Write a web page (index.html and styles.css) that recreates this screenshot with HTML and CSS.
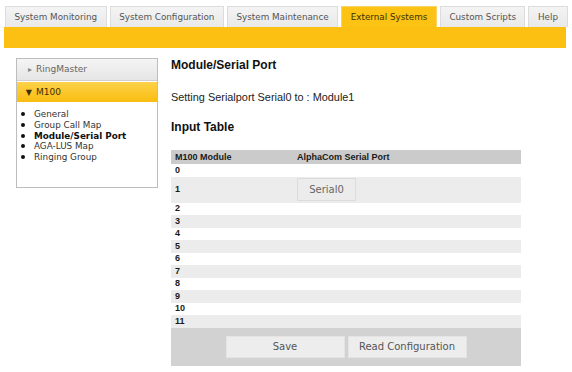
FILE: index.html
```html
<!DOCTYPE html>
<html lang="en">
<head>
    <meta charset="UTF-8">
    <title>External Systems - M100</title>
    <link rel="stylesheet" href="styles.css">
</head>
<body>

    <!-- main tabs -->
    <div class="tabs">
        <span class="tab">System Monitoring</span>
        <span class="tab">System Configuration</span>
        <span class="tab">System Maintenance</span>
        <span class="tab active">External Systems</span>
        <span class="tab">Custom Scripts</span>
        <span class="tab">Help</span>
    </div>
    <div class="bar"></div>

    <div class="main">
        <!-- left menu -->
        <div class="side">
            <div class="group closed"><span class="arrow">&#9656;</span>RingMaster</div>
            <div class="group open"><span class="arrow">&#9660;</span>M100</div>
            <ul class="menu">
                <li>General</li>
                <li>Group Call Map</li>
                <li class="current">Module/Serial Port</li>
                <li>AGA-LUS Map</li>
                <li>Ringing Group</li>
            </ul>
        </div>

        <!-- page content -->
        <div class="content">
            <h1>Module/Serial Port</h1>
            <p class="msg">Setting Serialport Serial0 to : Module1</p>
            <h2>Input Table</h2>

            <table class="grid">
                <tr class="head"><th class="c1">M100 Module</th><th>AlphaCom Serial Port</th></tr>
                <tr><td class="c1">0</td><td></td></tr>
                <tr class="alt big"><td class="c1">1</td><td><button class="port">Serial0</button></td></tr>
                <tr><td class="c1">2</td><td></td></tr>
                <tr class="alt"><td class="c1">3</td><td></td></tr>
                <tr><td class="c1">4</td><td></td></tr>
                <tr class="alt"><td class="c1">5</td><td></td></tr>
                <tr><td class="c1">6</td><td></td></tr>
                <tr class="alt"><td class="c1">7</td><td></td></tr>
                <tr><td class="c1">8</td><td></td></tr>
                <tr class="alt"><td class="c1">9</td><td></td></tr>
                <tr><td class="c1">10</td><td></td></tr>
                <tr class="alt"><td class="c1">11</td><td></td></tr>
            </table>
            <div class="foot">
                <button class="btn">Save</button>
                <button class="btn">Read Configuration</button>
            </div>
        </div>
    </div>

</body>
</html>
```

FILE: styles.css
```css
body { margin: 0; width: 572px; font-family: "DejaVu Sans", Verdana, sans-serif; background: #fff; }
.tabs { display: flex; gap: 3px; padding: 6px 0 0 5px; height: 21px; }
.tab { display: block; padding: 0 8.5px; height: 20px; line-height: 21px; font-size: 8.8px; color: #555; background: linear-gradient(#f4f4f4, #e9e9e9); border: 1px solid #dcdcdc; border-bottom: none; white-space: nowrap; }
.tab.active { background: #fcc214; border-color: #f6d36a; color: #3a3000; }
.bar { margin-left: 4px; width: 562px; height: 21px; background: #fcc012; }
.main { display: flex; padding-top: 10px; }
.side { margin-left: 16px; width: 140px; height: 128px; border: 1px solid #bdbdbd; }
.group { height: 21px; line-height: 21px; font-size: 9px; }
.group .arrow { display: inline-block; width: 15px; text-align: right; margin-right: 4px; font-size: 8px; }
.group.closed { background: linear-gradient(#f5f5f5, #e5e5e5); border-bottom: 1px solid #cfcfcf; color: #666; }
.group.closed .arrow { color: #888; }
.group.open { margin-top: 1px; height: 20px; line-height: 20px; background: linear-gradient(#fcd24a, #f9bd10); color: #3b3000; }
.menu { list-style: none; margin: 7px 0 0; padding: 0 0 0 4px; font-size: 8.8px; line-height: 10.8px; color: #333; }
.menu li::before { content: ""; display: inline-block; width: 4px; height: 4px; border-radius: 50%; background: #111; margin-right: 9px; vertical-align: 1px; }
.menu li.current { font-weight: bold; color: #111; }
.content { margin-left: 13px; width: 350px; font-family: "Liberation Sans", Arial, sans-serif; color: #111; }
h1 { margin: 0; font-size: 12px; line-height: 15px; }
.msg { margin: 17px 0 0; font-size: 10.9px; line-height: 14px; color: #222; }
h2 { margin: 16px 0 0; font-size: 12px; line-height: 15px; }
.grid { margin-top: 15px; width: 350px; border-collapse: collapse; font-size: 9px; }
.grid th, .grid td { padding: 0; text-align: left; font-weight: bold; height: 12.5px; line-height: 11px; color: #1a1a1a; }
.grid .c1 { width: 122px; padding-left: 4px; }
.grid tr.head th { background: #cbcbcb; height: 14px; }
.grid tr.alt td { background: #ececec; }
.grid tr.big td { height: 26px; }
.port { margin: 0; width: 59px; height: 23px; padding: 0; font-family: "DejaVu Sans", Verdana, sans-serif; font-size: 10px; color: #666; background: #ececec; border: 1px solid #dcdcdc; }
.foot { display: flex; justify-content: center; gap: 3px; padding: 8px 0; background: #d2d2d2; }
.btn { width: 119px; height: 22px; padding: 0; font-family: "DejaVu Sans", Verdana, sans-serif; font-size: 10px; color: #555; background: #ededed; border: 1px solid #e4e4e4; }
```
